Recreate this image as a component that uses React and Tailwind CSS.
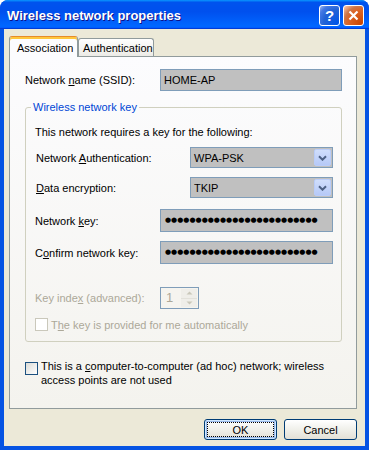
import React from 'react';

const Key = ({ children }) => <span className="underline underline-offset-[1px]">{children}</span>;

const CheckBox = ({ disabled }) => (
  <span
    className={`inline-block h-[13px] w-[13px] shrink-0 border ${
      disabled
        ? 'border-[#CAC8BB] bg-white'
        : 'border-[#1C5180] bg-gradient-to-br from-[#DCDCD7] to-white'
    }`}
  />
);

const Field = ({ children, className = '' }) => (
  <div className={`flex items-center overflow-hidden border border-[#7F9DB9] bg-[#C0C0C0] ${className}`}>{children}</div>
);

const Combo = ({ value }) => (
  <div className="flex h-[21px] w-[143px] items-stretch border border-[#7F9DB9] bg-[#C0C0C0] p-px">
    <span className="flex flex-1 items-center pl-[2px]">{value}</span>
    <span className="flex w-[17px] items-center justify-center rounded-[2px] border border-[#B9CCF9] bg-gradient-to-b from-[#D0DEFC] to-[#B6C9F7]">
      <svg width="9" height="6" viewBox="0 0 9 6">
        <path d="M1 1.2 L4.5 4.7 L8 1.2" fill="none" stroke="#4D6185" strokeWidth="2" />
      </svg>
    </span>
  </div>
);

const Dots = () => (
  <span className="whitespace-nowrap font-['DejaVu_Sans',sans-serif] text-[7px] leading-none tracking-[0px] text-black">
    {'●'.repeat(25)}
  </span>
);

const App = () => {
  return (
    <div className="h-[450px] w-[369px] bg-white font-['Liberation_Sans',Arial,sans-serif] text-[11px] leading-[14px] text-black">
      <div className="flex h-full flex-col overflow-hidden rounded-t-[8px] bg-[#0553E3]">
        {/* title bar */}
        <div className="flex h-[29px] shrink-0 items-start justify-between bg-[linear-gradient(180deg,#0997ff,#0053ee_8%,#0050ee_40%,#0066ff_88%,#0066ff_93%,#005bff_95%,#003dd7_96%,#003dd7)] pl-[7px] pr-[5px]">
          <span className="mt-[9px] text-[13px] font-bold leading-[14px] text-white [text-shadow:1px_1px_#0f1089]">
            Wireless network properties
          </span>
          <div className="mt-[5px] flex gap-[3px]">
            <div className="flex h-[21px] w-[21px] items-center justify-center rounded-[3px] border border-white bg-[radial-gradient(circle_at_90%_90%,#0054E9_0%,#2263D5_55%,#4479E4_80%,#A3BBEC)] text-[15px] font-bold leading-none text-white">
              ?
            </div>
            <div className="flex h-[21px] w-[21px] items-center justify-center rounded-[3px] border border-white bg-[radial-gradient(circle_at_90%_90%,#CC4600_0%,#DC6527_55%,#CD7546_70%,#FFCCB2)]">
              <svg width="11" height="11" viewBox="0 0 11 11">
                <path d="M1.5 1.5 L9.5 9.5 M9.5 1.5 L1.5 9.5" stroke="white" strokeWidth="2.2" />
              </svg>
            </div>
          </div>
        </div>

        {/* client area */}
        <div className="flex flex-1 flex-col px-[4px] pb-[4px]">
          <div className="flex flex-1 flex-col bg-[#ECE9D8] pl-[5px] pr-[8px] pt-[7px]">
            {/* tabs */}
            <div className="relative z-10 -mb-px flex h-[21px] items-end">
              <div className="flex h-[21px] w-[69px] items-center rounded-t-[3px] border-x border-t border-x-[#919B9C] border-t-[#E68B2C] bg-[#FCFCFE] pl-[7px] pt-[1px] [box-shadow:inset_0_2px_#FFC73C]">
                Association
              </div>
              <div className="mb-px flex h-[18px] w-[76px] items-center rounded-t-[3px] border-x border-t border-[#919B9C] bg-gradient-to-b from-white to-[#ECEBE6] pl-[4px]">
                Authentication
              </div>
            </div>

            {/* tab page */}
            <div className="flex h-[353px] flex-col border border-[#919B9C] bg-gradient-to-b from-[#FCFCFE] to-[#F4F3EE] pl-[15px] pr-[14px]">
              <div className="mt-[12px] flex h-[22px] items-center">
                <span className="w-[135px]">
                  Network <Key>n</Key>ame (SSID):
                </span>
                <Field className="h-[22px] flex-1 pl-[3px]">HOME-AP</Field>
              </div>

              <fieldset className="mt-[9px] rounded-[3px] border border-[#D0D0BF] p-0">
                <legend className="ml-[5px] px-[2px] leading-[14px] text-[#0046D5]">Wireless network key</legend>
                <div className="flex flex-col pb-[10px] pl-[9px]">
                  <div className="mt-[11px] leading-[14px]">This network requires a key for the following:</div>

                  <div className="mt-[8px] flex h-[21px] items-center">
                    <span className="w-[155px] pl-px">
                      Network <Key>A</Key>uthentication:
                    </span>
                    <Combo value="WPA-PSK" />
                  </div>

                  <div className="mt-[9px] flex h-[21px] items-center">
                    <span className="w-[155px] pl-px">
                      <Key>D</Key>ata encryption:
                    </span>
                    <Combo value="TKIP" />
                  </div>

                  <div className="mt-[11px] flex h-[23px] items-center">
                    <span className="w-[125px]">
                      Network <Key>k</Key>ey:
                    </span>
                    <Field className="h-[23px] w-[173px] pl-[4px]">
                      <Dots />
                    </Field>
                  </div>

                  <div className="mt-[9px] flex h-[23px] items-center">
                    <span className="w-[125px]">
                      C<Key>o</Key>nfirm network key:
                    </span>
                    <Field className="h-[23px] w-[173px] pl-[4px]">
                      <Dots />
                    </Field>
                  </div>

                  <div className="mt-[23px] flex h-[22px] items-center text-[#ACA899]">
                    <span className="w-[125px]">
                      Key inde<Key>x</Key> (advanced):
                    </span>
                    <div className="flex h-[22px] w-[39px] items-stretch border border-[#7F9DB9] bg-[#F5F4EF] p-px">
                      <span className="flex flex-1 items-center pl-[4px] text-[13px]">1</span>
                      <span className="flex w-[16px] flex-col">
                        <span className="flex flex-1 items-center justify-center border-b border-[#E2E1DA] bg-[#EFEEE9]">
                          <svg width="7" height="4" viewBox="0 0 7 4">
                            <path d="M0.5 3.5 L3.5 0.5 L6.5 3.5 Z" fill="#C9C7BA" />
                          </svg>
                        </span>
                        <span className="flex flex-1 items-center justify-center bg-[#EFEEE9]">
                          <svg width="7" height="4" viewBox="0 0 7 4">
                            <path d="M0.5 0.5 L3.5 3.5 L6.5 0.5 Z" fill="#C9C7BA" />
                          </svg>
                        </span>
                      </span>
                    </div>
                  </div>

                  <div className="mt-[9px] flex h-[13px] items-center gap-[3px] text-[#ACA899]">
                    <CheckBox disabled />
                    <span>
                      T<Key>h</Key>e key is provided for me automatically
                    </span>
                  </div>
                </div>
              </fieldset>

              <div className="mt-[17px] flex items-start gap-[3px]">
                <span className="mt-[3px] flex">
                  <CheckBox />
                </span>
                <span className="leading-[14px]">
                  This is a <Key>c</Key>omputer-to-computer (ad hoc) network; wireless
                  <br />
                  access points are not used
                </span>
              </div>
            </div>

            {/* buttons */}
            <div className="mt-[10px] flex justify-end gap-[7px]">
              <button className="flex h-[21px] w-[73px] items-center justify-center rounded-[3px] border border-[#003C74] bg-gradient-to-b from-white via-[#F0F0EA] to-[#E3E0D6] p-[2px] [box-shadow:inset_0_0_0_1px_#CEE7FF,inset_0_0_0_2px_#98B8EA]">
                <span className="flex h-full w-full items-center justify-center border border-dotted border-black">OK</span>
              </button>
              <button className="flex h-[21px] w-[73px] items-center justify-center rounded-[3px] border border-[#003C74] bg-gradient-to-b from-white via-[#F0F0EA] to-[#E3E0D6]">
                Cancel
              </button>
            </div>
          </div>
        </div>
      </div>
    </div>
  );
};

export default App;
